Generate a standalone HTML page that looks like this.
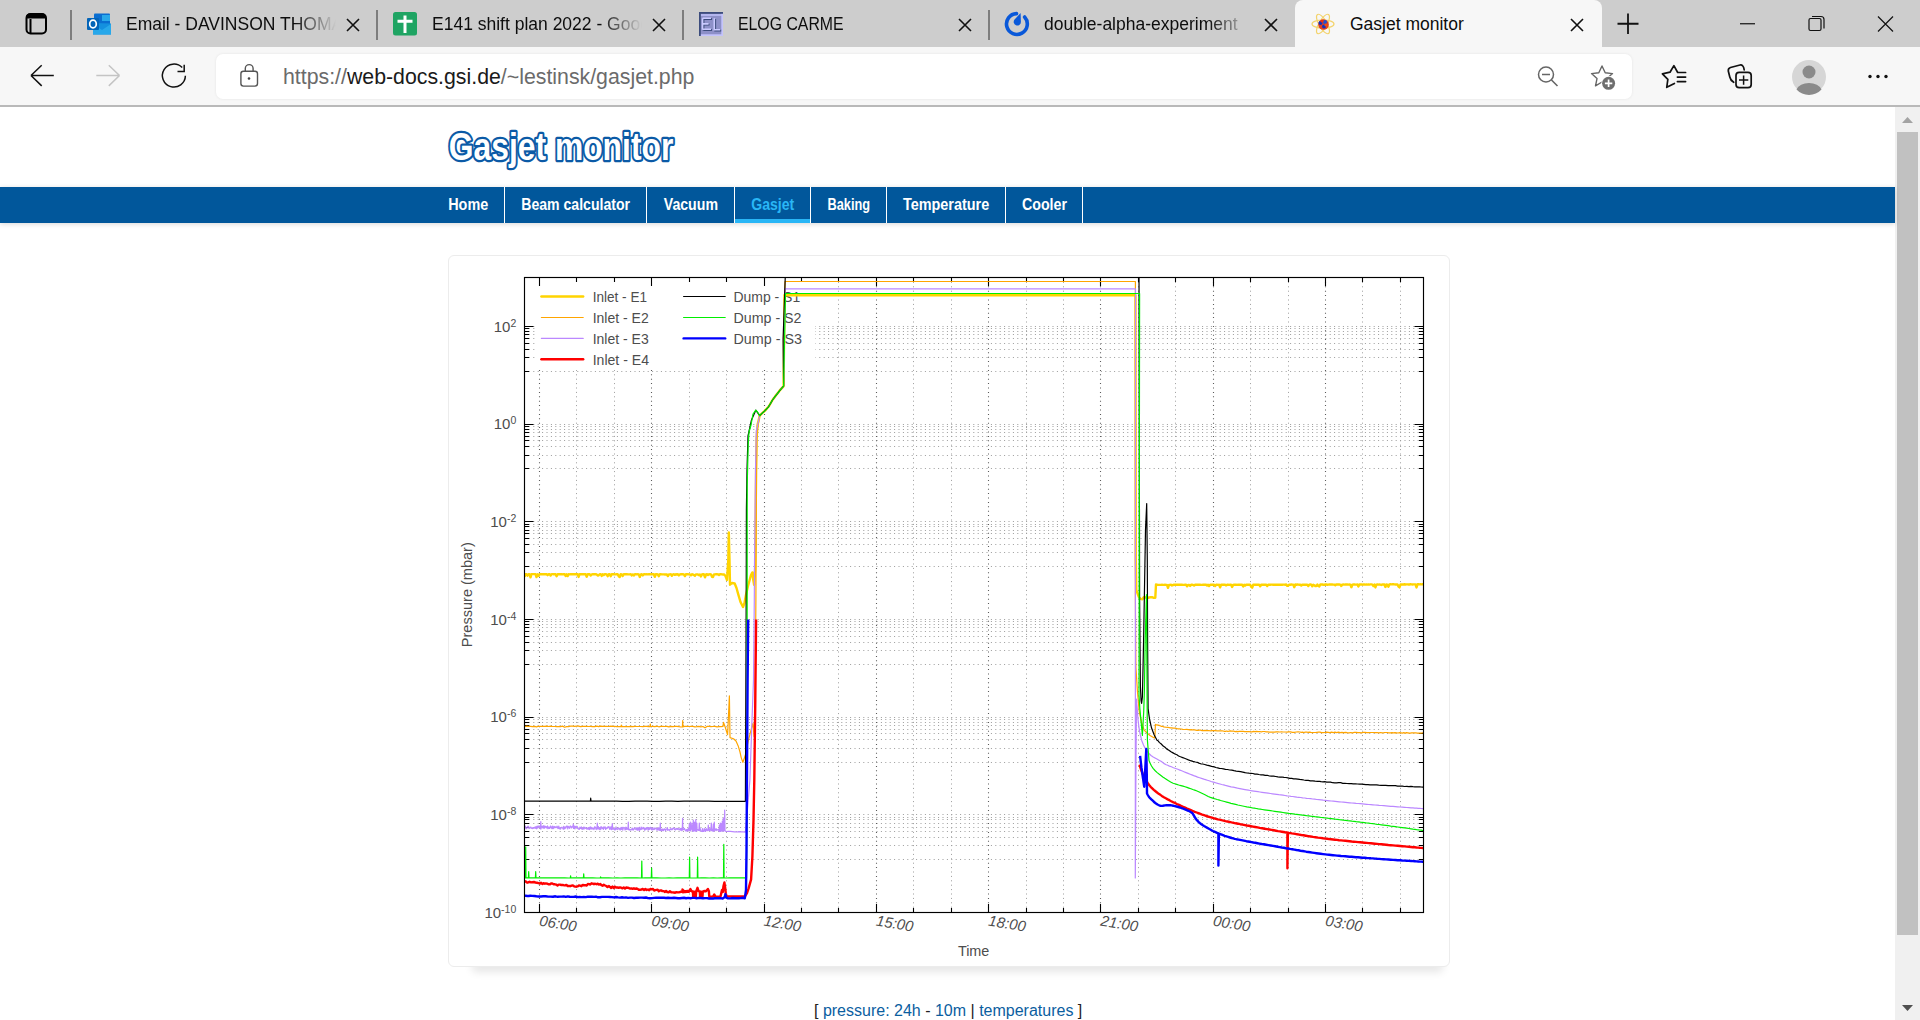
<!DOCTYPE html>
<html><head><meta charset="utf-8"><title>Gasjet monitor</title><style>
*{margin:0;padding:0;box-sizing:border-box}
html,body{width:1920px;height:1020px;overflow:hidden;background:#fff;font-family:"Liberation Sans",sans-serif}
.abs{position:absolute}
#tabs{left:0;top:0;width:1920px;height:47px;background:#cdcdcd}
.tabtxt{position:absolute;top:13.3px;font-size:17.5px;color:#0d0d0d;white-space:nowrap;overflow:hidden;line-height:22px}
.fade{-webkit-mask-image:linear-gradient(to right,#000 80%,transparent 100%)}
.sep{position:absolute;top:10px;width:1.5px;height:30px;background:#7d7d7d}
#toolbar{left:0;top:47px;width:1920px;height:58px;background:#f7f7f7}
#tbline{left:0;top:105px;width:1920px;height:2px;background:#b9b9b9}
#addr{left:216px;top:54px;width:1416px;height:45px;background:#fff;border-radius:7px;box-shadow:0 0 3px rgba(0,0,0,.08)}
#url{left:283px;top:65px;font-size:21.3px;color:#6b6b6b;white-space:nowrap;line-height:24px}
#url b{font-weight:normal;color:#1a1a1a}
#page{left:0;top:107px;width:1895px;height:913px;background:#fff;overflow:hidden}
#sb{left:1895px;top:107px;width:25px;height:913px;background:#f0f0f0}
#thumb{left:1897px;top:132px;width:21px;height:803px;background:#c1c1c1}
#nav{left:0;top:187px;width:1895px;height:36px;background:#01579b;box-shadow:0 1px 5px rgba(0,0,0,.16)}
.nsep{position:absolute;top:187px;width:1.5px;height:36px;background:#fff}
#card{left:448px;top:255px;width:1002px;height:712px;border:1px solid #ececec;border-radius:6px;background:#fff}
#cardsh{left:470px;top:950px;width:975px;height:16px;box-shadow:0 8px 8px -2px rgba(0,0,0,.10);border-radius:0 0 6px 6px}
#foot{left:814px;top:1001px;font-size:16px;line-height:19px;color:#222;white-space:nowrap}
#foot a{color:#0b5e9f;text-decoration:none}
</style></head>
<body>
<div id="tabs" class="abs"></div>
<div class="abs" style="left:1295px;top:0;width:307px;height:47px;background:#f7f7f7;border-radius:8px 8px 0 0"></div>
<div class="sep" style="left:70.25px"></div>
<div class="sep" style="left:376.25px"></div>
<div class="sep" style="left:682.25px"></div>
<div class="sep" style="left:988.25px"></div>
<div class="tabtxt fade" style="left:126px;width:210px">Email - DAVINSON THOMAS</div>
<div class="tabtxt fade" style="left:432px;width:210px">E141 shift plan 2022 - Google Sheets</div>
<div class="tabtxt" style="left:738px;width:210px;transform:scaleX(0.905);transform-origin:0 0">ELOG CARME</div>
<div class="tabtxt fade" style="left:1044px;width:206px">double-alpha-experiment</div>
<div class="tabtxt" style="left:1350px;width:210px">Gasjet monitor</div>
<div id="toolbar" class="abs"></div>
<div id="tbline" class="abs"></div>
<div id="addr" class="abs"></div>
<div id="url" class="abs">https://<b>web-docs.gsi.de</b>/~lestinsk/gasjet.php</div>
<div id="page" class="abs"></div>
<div id="sb" class="abs"></div>
<div id="thumb" class="abs"></div>
<div id="nav" class="abs"></div>
<div class="nsep" style="left:503.75px"></div>
<div class="nsep" style="left:645.5px"></div>
<div class="nsep" style="left:733.75px"></div>
<div class="nsep" style="left:809.75px"></div>
<div class="nsep" style="left:885.5px"></div>
<div class="nsep" style="left:1004.65px"></div>
<div class="nsep" style="left:1081.65px"></div>
<div class="abs" style="left:735px;top:219px;width:75px;height:4px;background:#29b6f6"></div>
<div id="cardsh" class="abs"></div>
<div id="card" class="abs"></div>
<div id="foot" class="abs">[ <a>pressure: 24h</a> - <a>10m</a> | <a>temperatures</a> ]</div>
<svg class="abs" style="left:0;top:0" width="1920" height="1020" viewBox="0 0 1920 1020">
<g fill="none" stroke="#000" stroke-width="2"><rect x="26.5" y="14" width="19.5" height="19.5" rx="4"/><path d="M30.5 19v14"/></g><path d="M26 18.5 v-1 a4 4 0 0 1 4 -4 h12 a4 4 0 0 1 4 4 v1 z" fill="#000"/>
<g><rect x="94" y="13.5" width="16" height="12" rx="1" fill="#0a6ed1"/><rect x="102" y="15" width="8" height="6" fill="#28a8ea"/><path d="M93 23 L111 23.5 L111 34.5 L93 34.5 Z" fill="#1490df"/><path d="M93 24 L102 30 L111 24 L111 34.5 L93 34.5Z" fill="#28a8ea"/><rect x="87" y="18" width="12" height="12" rx="1" fill="#0364b8"/><ellipse cx="93" cy="24" rx="3.3" ry="3.8" fill="none" stroke="#fff" stroke-width="1.7"/></g>
<path d="M347 19 L359 31 M359 19 L347 31" stroke="#111" stroke-width="1.6" fill="none"/>
<path d="M653 19 L665 31 M665 19 L653 31" stroke="#111" stroke-width="1.6" fill="none"/>
<path d="M959 19 L971 31 M971 19 L959 31" stroke="#111" stroke-width="1.6" fill="none"/>
<path d="M1265 19 L1277 31 M1277 19 L1265 31" stroke="#111" stroke-width="1.6" fill="none"/>
<path d="M1571 19 L1583 31 M1583 19 L1571 31" stroke="#111" stroke-width="1.6" fill="none"/>
<rect x="393" y="12" width="24" height="23.5" rx="2.5" fill="#1fa463"/><path d="M397.5 21.2 h15 M405 15.5 v17.5" stroke="#fff" stroke-width="3" fill="none"/>
<rect x="699" y="12" width="24" height="24" fill="#8d90c8"/><rect x="700.5" y="14" width="22" height="2" fill="#b4b6ee"/><rect x="699" y="34.3" width="24" height="1.7" fill="#c4c4fb"/><rect x="721.3" y="12" width="1.7" height="24" fill="#c4c4fb"/><rect x="699" y="12" width="24" height="1.8" fill="#3c4c7c"/><rect x="699" y="12" width="1.8" height="24" fill="#3c4c7c"/><path d="M703.5 19 h8.5 M703.5 19 v11.5 M703.5 24.6 h6 M703.5 30 h8.5 M715.2 19 v11.5 h6" fill="none" stroke="#3c4c7c" stroke-width="1.8"/><path d="M702.6 18.3 h8.5 M702.6 18.3 v11.5 M702.6 23.9 h6 M702.6 29.3 h8.5 M714.3 18.3 v11.5 h6" fill="none" stroke="#cacaff" stroke-width="1.6"/>
<path d="M1016.5 13.6 A10.4 10.4 0 1 0 1024.6 17" fill="none" stroke="#0958d9" stroke-width="3.6" stroke-linecap="round"/><path d="M1020.6 13 L1020.9 22 A3.6 3.6 0 1 1 1014.6 19.6 Z" fill="#0958d9"/>
<g transform="translate(1323 24)"><ellipse rx="11" ry="4" fill="none" stroke="#f3d36b" stroke-width="1.2"/><ellipse rx="11" ry="4" fill="none" stroke="#f3d36b" stroke-width="1.2" transform="rotate(60)"/><ellipse rx="11" ry="4" fill="none" stroke="#f3d36b" stroke-width="1.2" transform="rotate(-60)"/><circle cx="0.5" cy="0.5" r="5.3" fill="#e04020"/><circle cx="-2.5" cy="-1" r="2" fill="#1030c0"/><circle cx="2" cy="-2" r="2" fill="#2050d0"/><circle cx="1" cy="2.5" r="2" fill="#1030c0"/><circle cx="3" cy="1" r="1.6" fill="#f05010"/><circle cx="-1" cy="-3" r="1.6" fill="#f03010"/></g>
<path d="M1628 13.5 v20.5 M1617.5 23.75 h21" stroke="#111" stroke-width="1.8" fill="none"/>
<path d="M1740 23.75 h15" stroke="#111" stroke-width="1.2"/>
<rect x="1809" y="18.5" width="12" height="12" rx="1.5" fill="none" stroke="#111" stroke-width="1.2"/><path d="M1812 16.5 h9 a3 3 0 0 1 3 3 v9" fill="none" stroke="#111" stroke-width="1.2"/>
<path d="M1878 16.5 L1893 31.5 M1893 16.5 L1878 31.5" stroke="#111" stroke-width="1.2"/>
<path d="M31 75.5 H53.8 M31 75.5 L41.7 65.2 M31 75.5 L41.7 85.9" stroke="#111" stroke-width="1.5" fill="none"/>
<path d="M119.5 75.5 H96.3 M119.5 75.5 L108.8 65.2 M119.5 75.5 L108.8 85.9" stroke="#c4c4c4" stroke-width="1.5" fill="none"/>
<path d="M185.4 75.8 A11.5 11.5 0 1 1 182.2 67.6" stroke="#111" stroke-width="1.5" fill="none"/><path d="M184.2 64.8 V71.5 H177.5" stroke="#111" stroke-width="1.5" fill="none"/>
<rect x="240.9" y="71.2" width="16.6" height="14.9" rx="2.5" fill="none" stroke="#555" stroke-width="1.4"/><path d="M245.3 71 V68.5 a3.9 3.9 0 0 1 7.8 0 V71" fill="none" stroke="#555" stroke-width="1.4"/><circle cx="249" cy="78.5" r="1.3" fill="#444"/>
<circle cx="1546" cy="74.5" r="7.5" fill="none" stroke="#666" stroke-width="1.5"/><path d="M1542 74.5 h8 M1551.5 80 L1557.5 86" stroke="#666" stroke-width="1.6" fill="none"/>
<path d="M1602 66 L1605.2 72.8 L1612.5 73.6 L1607 78.6 L1608.5 85.8 L1602 82 L1595.5 85.8 L1597 78.6 L1591.5 73.6 L1598.8 72.8 Z" fill="none" stroke="#666" stroke-width="1.4" stroke-linejoin="round"/><circle cx="1608.6" cy="83.3" r="7.2" fill="#fff"/><circle cx="1608.6" cy="83.3" r="6.5" fill="#6e6e6e"/><path d="M1608.6 79.6 v7.4 M1604.9 83.3 h7.4" stroke="#fff" stroke-width="1.7"/>
<path d="M1674.4 83.4 L1666.75 87.25 L1667.85 79.3 L1662.4 73.85 L1670 72.2 L1673.9 65.65 L1677.7 72.5 H1685.6 M1677.4 77.1 H1685.6 M1677.4 81.6 H1685.6" fill="none" stroke="#111" stroke-width="1.7" stroke-linejoin="round" stroke-linecap="round"/>
<path d="M1733.7 82.3 Q1730.5 80.5 1729.8 77 L1728.3 71 Q1728 68.3 1730.5 67.5 L1740 65 Q1743.5 64.5 1744.2 69.8" fill="none" stroke="#111" stroke-width="1.7" stroke-linecap="round"/><rect x="1736" y="72.3" width="15.2" height="15.4" rx="3.2" fill="none" stroke="#111" stroke-width="1.7"/><path d="M1743.6 75.5 v9.2 M1739 80.1 h9.3" stroke="#111" stroke-width="1.5"/>
<circle cx="1809" cy="77" r="17" fill="#d6d6d6"/><circle cx="1809" cy="72" r="6.5" fill="#8a8a8a"/><path d="M1796.5 89.5 a13 9 0 0 1 25 0 a17 17 0 0 1 -25 0z" fill="#8a8a8a"/>
<circle cx="1870" cy="76.5" r="1.7" fill="#111"/>
<circle cx="1878" cy="76.5" r="1.7" fill="#111"/>
<circle cx="1886" cy="76.5" r="1.7" fill="#111"/>
<path d="M1902 123 L1907.5 117 L1913 123 Z" fill="#a3a3a3"/>
<path d="M1902 1005 L1913 1005 L1907.5 1011 Z" fill="#505050"/>
<text x="448.8" y="160.2" font-family="Liberation Sans" font-weight="bold" font-size="38" fill="#fff" stroke="#0b5aa6" stroke-width="4.6" paint-order="stroke" textLength="224.5" lengthAdjust="spacingAndGlyphs" stroke-linejoin="round">Gasjet monitor</text>
<text x="448.2" y="210" font-family="Liberation Sans" font-weight="bold" font-size="16" fill="#fff" textLength="40.0" lengthAdjust="spacingAndGlyphs">Home</text>
<text x="521.25" y="210" font-family="Liberation Sans" font-weight="bold" font-size="16" fill="#fff" textLength="108.8" lengthAdjust="spacingAndGlyphs">Beam calculator</text>
<text x="663.75" y="210" font-family="Liberation Sans" font-weight="bold" font-size="16" fill="#fff" textLength="54.2" lengthAdjust="spacingAndGlyphs">Vacuum</text>
<text x="751.25" y="210" font-family="Liberation Sans" font-weight="bold" font-size="16" fill="#29b6f6" textLength="43.0" lengthAdjust="spacingAndGlyphs">Gasjet</text>
<text x="827.5" y="210" font-family="Liberation Sans" font-weight="bold" font-size="16" fill="#fff" textLength="42.5" lengthAdjust="spacingAndGlyphs">Baking</text>
<text x="902.9" y="210" font-family="Liberation Sans" font-weight="bold" font-size="16" fill="#fff" textLength="86.3" lengthAdjust="spacingAndGlyphs">Temperature</text>
<text x="1022" y="210" font-family="Liberation Sans" font-weight="bold" font-size="16" fill="#fff" textLength="45.0" lengthAdjust="spacingAndGlyphs">Cooler</text>
<defs><clipPath id="pc"><rect x="524.5" y="277.5" width="899.0" height="634.9"/></clipPath></defs>
<path d="M576.50 277.5 V912.4 M614.50 277.5 V912.4 M689.50 277.5 V912.4 M726.50 277.5 V912.4 M801.50 277.5 V912.4 M838.50 277.5 V912.4 M913.50 277.5 V912.4 M951.50 277.5 V912.4 M1026.50 277.5 V912.4 M1063.50 277.5 V912.4 M1138.50 277.5 V912.4 M1175.50 277.5 V912.4 M1250.50 277.5 V912.4 M1288.50 277.5 V912.4 M1362.50 277.5 V912.4 M1400.50 277.5 V912.4 M524.5 912.50 H1423.5 M524.5 814.50 H1423.5 M524.5 717.50 H1423.5 M524.5 619.50 H1423.5 M524.5 521.50 H1423.5 M524.5 424.50 H1423.5 M524.5 326.50 H1423.5 M524.5 859.50 H1423.5 M524.5 845.50 H1423.5 M524.5 837.50 H1423.5 M524.5 831.50 H1423.5 M524.5 827.50 H1423.5 M524.5 823.50 H1423.5 M524.5 819.50 H1423.5 M524.5 817.50 H1423.5 M524.5 762.50 H1423.5 M524.5 748.50 H1423.5 M524.5 739.50 H1423.5 M524.5 733.50 H1423.5 M524.5 729.50 H1423.5 M524.5 725.50 H1423.5 M524.5 722.50 H1423.5 M524.5 719.50 H1423.5 M524.5 664.50 H1423.5 M524.5 650.50 H1423.5 M524.5 642.50 H1423.5 M524.5 636.50 H1423.5 M524.5 631.50 H1423.5 M524.5 627.50 H1423.5 M524.5 624.50 H1423.5 M524.5 621.50 H1423.5 M524.5 566.50 H1423.5 M524.5 552.50 H1423.5 M524.5 544.50 H1423.5 M524.5 538.50 H1423.5 M524.5 533.50 H1423.5 M524.5 530.50 H1423.5 M524.5 526.50 H1423.5 M524.5 524.50 H1423.5 M524.5 468.50 H1423.5 M524.5 455.50 H1423.5 M524.5 446.50 H1423.5 M524.5 440.50 H1423.5 M524.5 436.50 H1423.5 M524.5 432.50 H1423.5 M524.5 429.50 H1423.5 M524.5 426.50 H1423.5 M524.5 371.50 H1423.5 M524.5 357.50 H1423.5 M524.5 349.50 H1423.5 M524.5 343.50 H1423.5 M524.5 338.50 H1423.5 M524.5 334.50 H1423.5 M524.5 331.50 H1423.5 M524.5 328.50 H1423.5" stroke="#9c9c9c" stroke-width="1" stroke-dasharray="1 3.4" fill="none"/>
<path d="M539.50 277.5 V912.4 M651.50 277.5 V912.4 M764.50 277.5 V912.4 M876.50 277.5 V912.4 M988.50 277.5 V912.4 M1100.50 277.5 V912.4 M1213.50 277.5 V912.4 M1325.50 277.5 V912.4" stroke="#5a5a5a" stroke-width="1.1" stroke-dasharray="1 3.4" fill="none"/>
<rect x="535" y="279" width="280.5" height="91" fill="#fff"/>
<path d="M539.50 912.5 v-8.5 M539.50 277.5 v8.5 M576.50 912.5 v-4.5 M576.50 277.5 v4.5 M614.50 912.5 v-4.5 M614.50 277.5 v4.5 M651.50 912.5 v-8.5 M651.50 277.5 v8.5 M689.50 912.5 v-4.5 M689.50 277.5 v4.5 M726.50 912.5 v-4.5 M726.50 277.5 v4.5 M764.50 912.5 v-8.5 M764.50 277.5 v8.5 M801.50 912.5 v-4.5 M801.50 277.5 v4.5 M838.50 912.5 v-4.5 M838.50 277.5 v4.5 M876.50 912.5 v-8.5 M876.50 277.5 v8.5 M913.50 912.5 v-4.5 M913.50 277.5 v4.5 M951.50 912.5 v-4.5 M951.50 277.5 v4.5 M988.50 912.5 v-8.5 M988.50 277.5 v8.5 M1026.50 912.5 v-4.5 M1026.50 277.5 v4.5 M1063.50 912.5 v-4.5 M1063.50 277.5 v4.5 M1100.50 912.5 v-8.5 M1100.50 277.5 v8.5 M1138.50 912.5 v-4.5 M1138.50 277.5 v4.5 M1175.50 912.5 v-4.5 M1175.50 277.5 v4.5 M1213.50 912.5 v-8.5 M1213.50 277.5 v8.5 M1250.50 912.5 v-4.5 M1250.50 277.5 v4.5 M1288.50 912.5 v-4.5 M1288.50 277.5 v4.5 M1325.50 912.5 v-8.5 M1325.50 277.5 v8.5 M1362.50 912.5 v-4.5 M1362.50 277.5 v4.5 M1400.50 912.5 v-4.5 M1400.50 277.5 v4.5 M524.5 912.50 h9 M1423.5 912.50 h-9 M524.5 814.50 h9 M1423.5 814.50 h-9 M524.5 717.50 h9 M1423.5 717.50 h-9 M524.5 619.50 h9 M1423.5 619.50 h-9 M524.5 521.50 h9 M1423.5 521.50 h-9 M524.5 424.50 h9 M1423.5 424.50 h-9 M524.5 326.50 h9 M1423.5 326.50 h-9 M524.5 859.50 h4.5 M1423.5 859.50 h-4.5 M524.5 845.50 h4.5 M1423.5 845.50 h-4.5 M524.5 837.50 h4.5 M1423.5 837.50 h-4.5 M524.5 831.50 h4.5 M1423.5 831.50 h-4.5 M524.5 827.50 h4.5 M1423.5 827.50 h-4.5 M524.5 823.50 h4.5 M1423.5 823.50 h-4.5 M524.5 819.50 h4.5 M1423.5 819.50 h-4.5 M524.5 817.50 h4.5 M1423.5 817.50 h-4.5 M524.5 762.50 h4.5 M1423.5 762.50 h-4.5 M524.5 748.50 h4.5 M1423.5 748.50 h-4.5 M524.5 739.50 h4.5 M1423.5 739.50 h-4.5 M524.5 733.50 h4.5 M1423.5 733.50 h-4.5 M524.5 729.50 h4.5 M1423.5 729.50 h-4.5 M524.5 725.50 h4.5 M1423.5 725.50 h-4.5 M524.5 722.50 h4.5 M1423.5 722.50 h-4.5 M524.5 719.50 h4.5 M1423.5 719.50 h-4.5 M524.5 664.50 h4.5 M1423.5 664.50 h-4.5 M524.5 650.50 h4.5 M1423.5 650.50 h-4.5 M524.5 642.50 h4.5 M1423.5 642.50 h-4.5 M524.5 636.50 h4.5 M1423.5 636.50 h-4.5 M524.5 631.50 h4.5 M1423.5 631.50 h-4.5 M524.5 627.50 h4.5 M1423.5 627.50 h-4.5 M524.5 624.50 h4.5 M1423.5 624.50 h-4.5 M524.5 621.50 h4.5 M1423.5 621.50 h-4.5 M524.5 566.50 h4.5 M1423.5 566.50 h-4.5 M524.5 552.50 h4.5 M1423.5 552.50 h-4.5 M524.5 544.50 h4.5 M1423.5 544.50 h-4.5 M524.5 538.50 h4.5 M1423.5 538.50 h-4.5 M524.5 533.50 h4.5 M1423.5 533.50 h-4.5 M524.5 530.50 h4.5 M1423.5 530.50 h-4.5 M524.5 526.50 h4.5 M1423.5 526.50 h-4.5 M524.5 524.50 h4.5 M1423.5 524.50 h-4.5 M524.5 468.50 h4.5 M1423.5 468.50 h-4.5 M524.5 455.50 h4.5 M1423.5 455.50 h-4.5 M524.5 446.50 h4.5 M1423.5 446.50 h-4.5 M524.5 440.50 h4.5 M1423.5 440.50 h-4.5 M524.5 436.50 h4.5 M1423.5 436.50 h-4.5 M524.5 432.50 h4.5 M1423.5 432.50 h-4.5 M524.5 429.50 h4.5 M1423.5 429.50 h-4.5 M524.5 426.50 h4.5 M1423.5 426.50 h-4.5 M524.5 371.50 h4.5 M1423.5 371.50 h-4.5 M524.5 357.50 h4.5 M1423.5 357.50 h-4.5 M524.5 349.50 h4.5 M1423.5 349.50 h-4.5 M524.5 343.50 h4.5 M1423.5 343.50 h-4.5 M524.5 338.50 h4.5 M1423.5 338.50 h-4.5 M524.5 334.50 h4.5 M1423.5 334.50 h-4.5 M524.5 331.50 h4.5 M1423.5 331.50 h-4.5 M524.5 328.50 h4.5 M1423.5 328.50 h-4.5" stroke="#000" stroke-width="1.1" fill="none"/>
<g font-family="Liberation Sans" font-size="15" fill="#4d4d4d"><text x="516.3" y="917.8" text-anchor="end"><tspan>10</tspan><tspan font-size="10.5" dy="-5">-10</tspan></text><text x="516.3" y="820.1" text-anchor="end"><tspan>10</tspan><tspan font-size="10.5" dy="-5">-8</tspan></text><text x="516.3" y="722.4" text-anchor="end"><tspan>10</tspan><tspan font-size="10.5" dy="-5">-6</tspan></text><text x="516.3" y="624.8" text-anchor="end"><tspan>10</tspan><tspan font-size="10.5" dy="-5">-4</tspan></text><text x="516.3" y="527.1" text-anchor="end"><tspan>10</tspan><tspan font-size="10.5" dy="-5">-2</tspan></text><text x="516.3" y="429.4" text-anchor="end"><tspan>10</tspan><tspan font-size="10.5" dy="-5">0</tspan></text><text x="516.3" y="331.7" text-anchor="end"><tspan>10</tspan><tspan font-size="10.5" dy="-5">2</tspan></text></g>
<g font-family="Liberation Sans" font-size="15" fill="#4d4d4d"><text transform="translate(538.7 925.6) rotate(9)" font-style="italic">06:00</text><text transform="translate(650.9 925.6) rotate(9)" font-style="italic">09:00</text><text transform="translate(763.2 925.6) rotate(9)" font-style="italic">12:00</text><text transform="translate(875.5 925.6) rotate(9)" font-style="italic">15:00</text><text transform="translate(987.8 925.6) rotate(9)" font-style="italic">18:00</text><text transform="translate(1100.1 925.6) rotate(9)" font-style="italic">21:00</text><text transform="translate(1212.4 925.6) rotate(9)" font-style="italic">00:00</text><text transform="translate(1324.7 925.6) rotate(9)" font-style="italic">03:00</text></g>
<text transform="translate(471.9 647.2) rotate(-90)" font-family="Liberation Sans" font-size="15" fill="#4d4d4d" textLength="105" lengthAdjust="spacingAndGlyphs">Pressure (mbar)</text>
<text x="957.9" y="955.9" font-family="Liberation Sans" font-size="15" fill="#4d4d4d" textLength="31.5" lengthAdjust="spacingAndGlyphs">Time</text>
<g font-family="Liberation Sans" font-size="15" fill="#4d4d4d"><path d="M541.4 296.5 H583.2" stroke="#ffd400" stroke-width="2.4" stroke-linecap="round"/><text x="592.7" y="302.1" textLength="54.3" lengthAdjust="spacingAndGlyphs">Inlet - E1</text><path d="M541.4 317.5 H583.2" stroke="#ffa500" stroke-width="1.2" stroke-linecap="round"/><text x="592.7" y="323.1" textLength="56" lengthAdjust="spacingAndGlyphs">Inlet - E2</text><path d="M541.4 338.4 H583.2" stroke="#bb88ff" stroke-width="1.2" stroke-linecap="round"/><text x="592.7" y="344.0" textLength="56" lengthAdjust="spacingAndGlyphs">Inlet - E3</text><path d="M541.4 359.3 H583.2" stroke="#ff0000" stroke-width="2.4" stroke-linecap="round"/><text x="592.7" y="364.9" textLength="56.3" lengthAdjust="spacingAndGlyphs">Inlet - E4</text><path d="M683.6 296.5 H725.2" stroke="#000000" stroke-width="1.2" stroke-linecap="round"/><text x="733.5" y="302.1" textLength="66.7" lengthAdjust="spacingAndGlyphs">Dump - S1</text><path d="M683.6 317.5 H725.2" stroke="#00ee00" stroke-width="1.2" stroke-linecap="round"/><text x="733.5" y="323.1" textLength="68" lengthAdjust="spacingAndGlyphs">Dump - S2</text><path d="M683.6 338.4 H725.2" stroke="#0000ff" stroke-width="2.4" stroke-linecap="round"/><text x="733.5" y="344.0" textLength="68.5" lengthAdjust="spacingAndGlyphs">Dump - S3</text></g>
<g clip-path="url(#pc)"><path d="M524.5 576.7 L525.5 574.2 L526.5 574.1 L527.5 575.7 L528.5 574.2 L529.5 574.2 L530.5 577.3 L531.5 574.2 L532.5 574.1 L533.5 574.1 L534.5 574.1 L535.5 574.3 L536.5 577.1 L537.5 574.3 L538.5 575.7 L539.5 574.3 L540.5 574.3 L541.5 574.2 L542.5 574.3 L543.5 574.2 L544.6 574.2 L545.6 574.2 L546.6 574.2 L547.6 575.2 L548.6 574.3 L549.6 574.1 L550.6 575.5 L551.6 574.1 L552.6 574.1 L553.6 574.3 L554.6 574.3 L555.6 574.3 L556.6 576.3 L557.6 574.2 L558.6 574.2 L559.6 574.2 L560.6 574.3 L561.6 574.1 L562.6 574.4 L563.6 574.2 L564.6 574.2 L565.6 575.9 L566.6 574.2 L567.6 576.1 L568.6 574.2 L569.6 574.4 L570.6 574.2 L571.6 574.1 L572.6 574.2 L573.6 574.3 L574.6 574.2 L575.6 574.3 L576.6 574.1 L577.6 574.2 L578.6 576.9 L579.6 574.2 L580.6 574.3 L581.6 574.3 L582.6 574.2 L583.6 574.2 L584.7 574.3 L585.7 574.2 L586.7 576.7 L587.7 574.3 L588.7 574.3 L589.7 574.3 L590.7 575.6 L591.7 574.4 L592.7 574.3 L593.7 574.2 L594.7 574.2 L595.7 574.2 L596.7 574.4 L597.7 575.6 L598.7 575.3 L599.7 574.2 L600.7 574.2 L601.7 575.9 L602.7 574.3 L603.7 575.0 L604.7 574.2 L605.7 574.3 L606.7 574.4 L607.7 576.2 L608.7 574.3 L609.7 574.3 L610.7 576.2 L611.7 574.3 L612.7 574.2 L613.7 574.2 L614.7 574.4 L615.7 574.4 L616.7 574.2 L617.7 574.2 L618.7 576.3 L619.7 577.1 L620.7 574.2 L621.7 574.4 L622.7 576.0 L623.7 574.2 L624.8 574.2 L625.8 574.2 L626.8 574.2 L627.8 574.4 L628.8 574.4 L629.8 574.4 L630.8 574.2 L631.8 575.4 L632.8 574.4 L633.8 575.5 L634.8 574.2 L635.8 574.2 L636.8 574.4 L637.8 574.3 L638.8 574.4 L639.8 577.0 L640.8 574.4 L641.8 574.3 L642.8 575.4 L643.8 574.3 L644.8 574.2 L645.8 574.4 L646.8 574.3 L647.8 574.4 L648.8 574.3 L649.8 574.2 L650.8 574.4 L651.8 574.3 L652.8 574.2 L653.8 574.3 L654.8 576.8 L655.8 574.3 L656.8 574.2 L657.8 574.4 L658.8 576.3 L659.8 574.3 L660.8 574.3 L661.8 574.4 L662.8 574.4 L663.8 574.4 L664.9 574.5 L665.9 574.4 L666.9 574.5 L667.9 576.0 L668.9 574.4 L669.9 574.4 L670.9 574.3 L671.9 575.8 L672.9 574.4 L673.9 574.3 L674.9 574.9 L675.9 574.3 L676.9 574.5 L677.9 574.3 L678.9 575.4 L679.9 574.4 L680.9 574.3 L681.9 574.3 L682.9 574.3 L683.9 574.4 L684.9 576.1 L685.9 574.2 L686.9 574.3 L687.9 574.3 L688.9 574.4 L689.9 574.4 L690.9 575.3 L691.9 574.3 L692.9 574.4 L693.9 575.1 L694.9 575.8 L695.9 574.4 L696.9 574.4 L697.9 574.5 L698.9 575.1 L699.9 574.4 L700.9 576.5 L701.9 574.4 L702.9 574.3 L703.9 574.3 L705.0 577.3 L706.0 574.5 L707.0 574.3 L708.0 575.0 L709.0 574.4 L710.0 574.3 L711.0 574.4 L712.0 576.8 L713.0 577.0 L714.0 574.4 L715.0 574.4 L716.0 574.3 L717.0 574.3 L718.0 574.4 L719.0 575.0 L720.0 574.3 L721.0 574.3 L722.0 574.4 L723.0 574.5 L724.0 574.4 L725.5 576.0 L727.0 580.0 L728.3 560.0 L728.8 532.4 L729.5 560.0 L730.0 584.7 L732.0 583.0 L734.7 583.5 L736.5 588.0 L738.2 594.1 L740.5 602.0 L743.0 607.0 L744.5 603.0 L745.9 595.3 L748.0 586.0 L750.0 578.8 L751.0 575.0 L752.4 572.4 L753.3 580.0 L754.1 584.7 L755.3 566.0 L755.8 500.0 L756.5 440.0 L757.5 425.0 L759.7 415.7 L762.0 413.4 L765.0 410.6 L768.5 406.8 L770.5 403.5 L772.5 400.0 L775.0 396.6 L777.4 393.6 L780.5 389.6 L783.6 386.1 L784.5 295.2 L1135.5 295.2 L1135.8 560.0 L1136.3 590.0 L1138.8 596.9 L1139.0 597.2 L1140.6 598.9 L1142.3 599.2 L1143.9 597.1 L1145.5 597.5 L1147.2 597.4 L1148.8 597.7 L1150.4 597.1 L1152.0 597.2 L1153.7 597.9 L1155.3 597.7 L1156.0 584.5 L1157.0 584.8 L1158.0 584.9 L1159.0 584.9 L1160.0 584.9 L1161.0 584.9 L1162.0 584.8 L1163.0 584.9 L1164.0 584.9 L1165.0 584.8 L1166.0 584.9 L1167.0 584.9 L1168.0 587.8 L1169.0 584.9 L1170.0 584.9 L1171.0 584.8 L1172.0 585.5 L1173.0 585.0 L1174.0 584.8 L1175.0 584.8 L1176.0 584.7 L1177.0 584.8 L1178.0 584.7 L1179.0 584.8 L1180.0 584.8 L1181.0 584.8 L1182.0 584.8 L1183.0 584.9 L1184.1 584.9 L1185.1 584.8 L1186.1 584.8 L1187.1 586.2 L1188.1 585.0 L1189.1 584.9 L1190.1 585.9 L1191.1 584.7 L1192.1 584.8 L1193.1 584.9 L1194.1 585.6 L1195.1 584.8 L1196.1 584.8 L1197.1 584.7 L1198.1 584.8 L1199.1 584.8 L1200.1 584.8 L1201.1 584.9 L1202.1 584.9 L1203.1 584.7 L1204.1 584.8 L1205.1 584.8 L1206.1 584.8 L1207.1 585.6 L1208.1 584.7 L1209.1 586.1 L1210.1 584.8 L1211.1 584.8 L1212.1 584.7 L1213.1 584.7 L1214.1 584.8 L1215.1 586.0 L1216.1 584.7 L1217.1 584.8 L1218.1 584.9 L1219.1 584.8 L1220.1 587.4 L1221.1 584.8 L1222.1 584.8 L1223.1 584.8 L1224.1 584.7 L1225.1 584.7 L1226.1 585.4 L1227.1 584.7 L1228.1 584.8 L1229.1 584.9 L1230.1 584.8 L1231.1 584.8 L1232.1 586.9 L1233.1 584.9 L1234.1 584.7 L1235.1 584.7 L1236.1 584.8 L1237.2 584.9 L1238.2 584.6 L1239.2 584.8 L1240.2 584.8 L1241.2 584.8 L1242.2 584.8 L1243.2 586.5 L1244.2 584.8 L1245.2 585.5 L1246.2 584.6 L1247.2 584.7 L1248.2 584.8 L1249.2 584.8 L1250.2 584.7 L1251.2 586.8 L1252.2 587.7 L1253.2 584.8 L1254.2 584.7 L1255.2 584.7 L1256.2 584.8 L1257.2 584.7 L1258.2 584.8 L1259.2 584.8 L1260.2 586.2 L1261.2 584.8 L1262.2 584.6 L1263.2 584.8 L1264.2 584.8 L1265.2 584.6 L1266.2 584.8 L1267.2 586.0 L1268.2 584.7 L1269.2 584.6 L1270.2 584.7 L1271.2 584.6 L1272.2 584.6 L1273.2 584.8 L1274.2 584.8 L1275.2 584.8 L1276.2 584.6 L1277.2 584.8 L1278.2 584.6 L1279.2 584.8 L1280.2 584.8 L1281.2 584.8 L1282.2 584.7 L1283.2 584.6 L1284.2 584.6 L1285.2 584.7 L1286.2 584.5 L1287.2 585.9 L1288.2 585.7 L1289.2 584.7 L1290.2 584.7 L1291.3 584.5 L1292.3 584.6 L1293.3 584.6 L1294.3 587.2 L1295.3 584.5 L1296.3 584.8 L1297.3 584.5 L1298.3 584.6 L1299.3 584.7 L1300.3 584.7 L1301.3 585.5 L1302.3 584.6 L1303.3 584.7 L1304.3 584.7 L1305.3 584.7 L1306.3 584.7 L1307.3 584.7 L1308.3 586.0 L1309.3 584.6 L1310.3 584.5 L1311.3 584.7 L1312.3 586.3 L1313.3 584.7 L1314.3 585.2 L1315.3 586.1 L1316.3 586.0 L1317.3 584.6 L1318.3 585.9 L1319.3 586.4 L1320.3 584.5 L1321.3 584.5 L1322.3 584.5 L1323.3 584.7 L1324.3 584.7 L1325.3 584.5 L1326.3 584.5 L1327.3 584.7 L1328.3 584.6 L1329.3 584.5 L1330.3 584.5 L1331.3 584.5 L1332.3 584.5 L1333.3 584.6 L1334.3 584.6 L1335.3 585.2 L1336.3 584.5 L1337.3 584.5 L1338.3 584.4 L1339.3 584.5 L1340.3 584.6 L1341.3 585.9 L1342.3 584.6 L1343.3 584.5 L1344.4 584.6 L1345.4 584.5 L1346.4 584.5 L1347.4 584.5 L1348.4 584.6 L1349.4 584.5 L1350.4 584.6 L1351.4 587.2 L1352.4 584.6 L1353.4 584.5 L1354.4 584.4 L1355.4 584.6 L1356.4 584.6 L1357.4 584.4 L1358.4 586.4 L1359.4 584.5 L1360.4 584.5 L1361.4 584.4 L1362.4 584.6 L1363.4 584.5 L1364.4 584.5 L1365.4 584.6 L1366.4 584.5 L1367.4 584.6 L1368.4 584.4 L1369.4 584.6 L1370.4 584.4 L1371.4 584.4 L1372.4 584.6 L1373.4 586.0 L1374.4 584.6 L1375.4 587.4 L1376.4 584.6 L1377.4 584.4 L1378.4 584.6 L1379.4 584.5 L1380.4 584.6 L1381.4 585.0 L1382.4 584.5 L1383.4 584.4 L1384.4 584.5 L1385.4 587.0 L1386.4 584.5 L1387.4 584.6 L1388.4 586.7 L1389.4 584.5 L1390.4 584.3 L1391.4 584.4 L1392.4 584.3 L1393.4 584.3 L1394.4 584.4 L1395.4 584.5 L1396.4 584.5 L1397.5 584.5 L1398.5 586.6 L1399.5 587.4 L1400.5 584.5 L1401.5 584.5 L1402.5 584.5 L1403.5 584.5 L1404.5 584.3 L1405.5 584.5 L1406.5 584.4 L1407.5 584.4 L1408.5 584.5 L1409.5 584.5 L1410.5 584.3 L1411.5 584.4 L1412.5 584.5 L1413.5 584.4 L1414.5 584.4 L1415.5 584.5 L1416.5 587.4 L1417.5 584.3 L1418.5 584.3 L1419.5 584.4 L1420.5 584.3 L1421.5 584.4 L1422.5 584.3 L1423.5 584.3" stroke="#ffd400" stroke-width="2.4" fill="none" stroke-linejoin="round"/><path d="M524.5 726.5 L526.5 726.1 L528.5 726.4 L530.5 726.4 L532.5 726.6 L534.5 726.4 L536.5 726.9 L538.5 726.3 L540.5 726.4 L542.5 726.4 L544.6 726.4 L546.6 726.1 L548.6 726.5 L550.6 726.1 L552.6 726.5 L554.6 726.5 L556.6 726.6 L558.6 726.5 L560.6 726.6 L562.6 726.1 L564.6 727.2 L566.6 726.6 L568.6 726.6 L570.6 726.2 L572.6 726.1 L574.6 726.3 L576.6 726.1 L578.6 726.1 L580.6 726.6 L582.6 726.4 L584.7 726.3 L586.7 726.3 L588.7 726.5 L590.7 726.3 L592.7 726.7 L594.7 726.7 L596.7 726.2 L598.7 726.6 L600.7 726.2 L602.7 726.3 L604.7 726.4 L606.7 726.3 L608.7 726.5 L610.7 726.1 L612.7 726.4 L614.7 726.4 L616.7 726.6 L618.7 726.5 L620.7 726.6 L621.0 726.6 L621.3 725.0 L621.6 726.6 L622.7 726.6 L624.8 726.5 L626.8 726.7 L628.8 726.7 L630.8 726.3 L632.8 726.6 L634.8 726.3 L636.8 726.5 L638.8 726.5 L640.8 726.5 L642.8 726.6 L644.8 726.4 L646.8 726.3 L648.8 726.6 L650.0 726.6 L650.3 724.0 L650.6 726.6 L650.8 726.5 L652.8 726.4 L654.8 726.7 L656.8 726.2 L658.8 726.8 L660.8 726.4 L662.8 726.3 L664.9 726.5 L666.9 726.4 L668.9 726.8 L670.9 726.4 L672.9 726.7 L674.9 726.3 L676.9 726.4 L678.9 726.7 L680.9 727.0 L682.4 727.0 L682.7 720.6 L683.0 727.0 L682.9 726.7 L684.9 726.3 L686.9 726.3 L688.9 726.5 L690.9 726.4 L692.9 726.4 L694.9 726.8 L696.9 726.6 L698.9 726.3 L700.9 726.8 L702.9 726.5 L705.0 727.8 L707.0 726.4 L709.0 726.4 L711.0 726.6 L713.0 726.5 L715.0 726.3 L717.0 726.8 L719.0 726.6 L721.0 726.6 L723.0 726.3 L723.5 722.4 L725.5 728.0 L727.6 734.7 L729.4 695.9 L730.0 737.6 L733.5 738.8 L736.0 741.0 L738.2 745.9 L740.0 752.0 L741.2 757.6 L742.9 762.4 L745.3 755.3 L748.2 741.2 L751.2 729.4 L752.9 723.5 L754.1 736.5 L755.2 690.0 L755.9 600.0 L756.4 470.0 L757.0 432.0 L759.7 415.7 L762.0 413.4 L765.0 410.6 L768.5 406.8 L770.5 403.5 L772.5 400.0 L775.0 396.6 L777.4 393.6 L780.5 389.6 L783.6 386.1 L785.0 281.5 L1135.4 281.5 L1135.4 600.0 L1135.9 667.4 L1137.5 692.0 L1139.2 711.3 L1141.5 722.0 L1144.0 729.8 L1147.0 733.0 L1150.0 735.5 L1154.3 738.0 L1155.0 735.0 L1155.4 724.4 L1155.4 724.7 L1156.5 724.8 L1158.0 725.2 L1160.0 725.7 L1161.2 726.3 L1162.4 726.3 L1163.7 726.9 L1165.5 727.2 L1168.0 727.3 L1169.1 727.7 L1170.4 727.8 L1171.7 727.8 L1173.1 728.2 L1174.5 728.2 L1176.0 728.3 L1177.6 728.8 L1179.3 728.9 L1181.1 729.0 L1182.9 729.3 L1184.7 729.5 L1186.6 729.4 L1188.6 729.6 L1189.9 729.9 L1191.1 729.6 L1192.3 729.8 L1193.4 729.9 L1194.6 729.9 L1195.7 730.1 L1196.9 730.3 L1198.0 730.4 L1199.3 730.2 L1200.6 730.2 L1202.0 730.6 L1203.4 730.6 L1205.0 730.4 L1206.7 730.6 L1208.5 730.5 L1210.4 730.8 L1212.6 730.6 L1214.8 730.6 L1217.3 730.8 L1220.0 730.8 L1221.1 730.9 L1222.1 730.9 L1223.2 731.0 L1224.4 731.4 L1225.5 731.3 L1226.6 731.0 L1227.8 731.4 L1229.0 731.2 L1230.2 730.9 L1231.4 731.2 L1232.7 731.0 L1234.0 731.2 L1235.2 731.6 L1236.5 731.4 L1237.9 731.7 L1239.2 731.4 L1240.5 731.3 L1241.9 731.3 L1243.3 731.3 L1244.7 731.6 L1246.1 731.6 L1247.6 731.7 L1249.0 731.5 L1250.5 731.8 L1252.0 731.8 L1253.5 731.4 L1255.0 731.7 L1256.5 731.4 L1258.1 731.6 L1259.7 731.5 L1261.3 731.8 L1262.9 731.5 L1264.5 731.5 L1266.1 731.9 L1267.8 731.9 L1269.4 732.1 L1271.1 732.1 L1272.8 732.0 L1274.5 732.1 L1276.2 731.8 L1278.0 731.9 L1279.7 732.0 L1281.5 731.9 L1283.3 732.0 L1285.1 732.0 L1286.9 732.1 L1288.7 731.8 L1290.6 731.9 L1292.4 732.3 L1294.3 732.4 L1296.2 732.0 L1298.1 731.9 L1300.0 732.0 L1301.3 732.4 L1302.5 732.2 L1303.9 732.5 L1305.2 732.2 L1306.6 732.0 L1308.0 732.4 L1309.4 732.1 L1310.9 732.4 L1312.3 732.6 L1313.8 732.5 L1315.3 732.5 L1316.9 732.3 L1318.4 732.1 L1320.0 732.2 L1321.6 732.6 L1323.2 732.6 L1324.9 732.5 L1326.5 732.2 L1328.2 732.4 L1329.9 732.6 L1331.6 732.2 L1333.3 732.7 L1335.0 732.2 L1336.7 732.6 L1338.4 732.2 L1340.2 732.7 L1341.9 732.4 L1343.7 732.6 L1345.5 732.3 L1347.2 732.7 L1349.0 732.9 L1350.8 732.5 L1352.6 732.8 L1354.3 732.4 L1356.1 732.3 L1357.9 732.7 L1359.7 732.5 L1361.4 732.8 L1363.2 732.4 L1365.0 732.4 L1366.8 732.6 L1368.5 732.7 L1370.3 732.5 L1372.0 732.5 L1373.7 732.5 L1375.5 732.6 L1377.2 732.5 L1378.9 732.8 L1380.6 732.5 L1382.2 732.8 L1383.9 732.7 L1385.6 732.5 L1387.2 732.5 L1388.8 732.9 L1390.4 732.9 L1392.0 732.6 L1393.5 732.9 L1395.1 732.6 L1396.6 732.8 L1398.1 733.0 L1399.6 732.7 L1401.0 732.8 L1402.4 733.1 L1403.8 732.7 L1405.2 733.1 L1406.5 732.6 L1407.9 732.8 L1409.1 733.1 L1410.4 733.1 L1411.6 732.8 L1412.8 732.9 L1414.0 732.8 L1415.1 732.8 L1416.2 732.9 L1417.2 733.2 L1418.2 733.0 L1419.2 733.2 L1420.2 733.0 L1421.1 733.1 L1421.9 733.0 L1422.7 732.8 L1423.5 733.0" stroke="#ffa500" stroke-width="1.2" fill="none" stroke-linejoin="round"/><path d="M524.5 826.5 L525.0 826.1 L525.4 826.4 L525.9 828.4 L526.3 828.6 L526.8 828.6 L527.2 827.2 L527.7 826.3 L528.1 826.6 L528.6 826.4 L529.0 828.6 L529.5 828.3 L529.9 828.1 L530.4 827.2 L530.8 827.0 L531.3 827.9 L531.7 828.4 L532.2 827.9 L532.6 828.6 L533.1 827.5 L533.5 828.3 L534.0 827.5 L534.4 827.3 L534.9 828.3 L535.3 827.0 L535.8 828.3 L536.2 826.4 L536.7 828.8 L537.1 828.0 L537.6 826.2 L538.0 827.8 L538.5 826.5 L538.9 825.9 L539.4 826.0 L539.8 827.0 L540.3 828.8 L540.5 828.8 L540.8 821.5 L541.1 828.8 L540.7 826.4 L541.2 827.4 L541.6 827.1 L542.1 826.2 L542.5 827.9 L543.0 826.6 L543.4 825.7 L543.9 828.5 L544.3 828.2 L544.8 825.8 L545.2 827.2 L545.7 826.7 L546.1 827.9 L546.6 826.7 L547.0 828.0 L547.5 825.8 L547.9 828.7 L548.4 827.9 L548.8 827.0 L549.3 828.5 L549.7 828.2 L550.2 826.8 L550.6 826.0 L551.1 827.9 L551.5 827.2 L552.0 828.7 L552.4 826.2 L552.9 828.6 L553.3 828.6 L553.8 826.4 L554.2 826.6 L554.7 827.9 L555.1 826.7 L555.6 827.4 L556.1 827.6 L556.5 827.1 L557.0 826.2 L557.4 826.8 L557.9 828.6 L558.3 828.5 L558.8 826.2 L559.2 828.2 L559.7 828.8 L560.1 827.9 L560.6 829.1 L561.0 827.9 L561.5 827.5 L561.9 827.2 L562.4 827.9 L562.8 828.1 L563.3 829.3 L563.7 826.4 L564.2 827.0 L564.6 829.0 L565.1 828.3 L565.5 827.0 L566.0 827.9 L566.4 826.2 L566.9 826.5 L567.3 826.1 L567.8 828.8 L568.2 826.4 L568.7 827.2 L569.1 827.1 L569.6 828.4 L570.0 826.3 L570.5 826.0 L570.9 826.6 L571.4 828.0 L571.8 827.2 L572.3 826.3 L572.7 827.0 L573.0 827.0 L573.3 824.0 L573.6 827.0 L573.2 827.0 L573.6 828.5 L574.1 828.5 L574.5 826.1 L575.0 828.9 L575.4 826.4 L575.9 827.5 L576.3 827.5 L576.8 826.2 L577.2 826.5 L577.7 828.6 L578.1 828.5 L578.6 828.8 L579.0 829.4 L579.5 829.2 L579.9 827.2 L580.4 828.4 L580.8 828.4 L581.3 826.9 L581.7 828.8 L582.2 829.3 L582.6 828.2 L583.1 828.9 L583.5 827.2 L584.0 829.1 L584.4 827.4 L584.9 827.3 L585.3 828.2 L585.8 828.3 L586.2 827.8 L586.7 829.1 L587.2 828.8 L587.6 828.1 L588.1 829.3 L588.5 827.7 L589.0 827.6 L589.4 829.6 L589.9 827.4 L590.3 826.8 L590.8 829.2 L591.2 828.7 L591.7 827.4 L592.1 829.1 L592.6 828.7 L593.0 827.9 L593.5 828.2 L593.9 829.6 L594.4 828.2 L594.8 826.7 L595.3 827.9 L595.7 827.4 L596.2 829.7 L596.6 827.9 L597.0 827.9 L597.3 823.0 L597.6 827.9 L597.1 827.8 L597.5 829.0 L598.0 829.0 L598.4 826.7 L598.9 828.8 L599.3 829.6 L599.8 828.4 L600.2 827.4 L600.7 829.6 L601.1 826.7 L601.6 828.2 L602.0 827.2 L602.5 828.4 L602.9 827.9 L603.4 829.5 L603.8 826.8 L604.3 828.1 L604.7 827.5 L605.2 826.9 L605.6 829.4 L606.1 828.8 L606.5 827.8 L607.0 828.4 L607.4 828.1 L607.9 826.8 L608.3 827.7 L608.8 826.7 L609.2 826.9 L609.7 829.5 L610.1 829.3 L610.6 827.6 L611.0 826.7 L611.5 829.6 L611.9 826.9 L612.0 826.9 L612.3 823.5 L612.6 826.9 L612.4 827.5 L612.8 829.5 L613.3 828.6 L613.7 828.2 L614.2 829.3 L614.6 829.8 L615.1 828.7 L615.5 829.8 L616.0 826.9 L616.4 828.5 L616.9 829.1 L617.3 829.6 L617.8 828.4 L618.3 828.9 L618.7 827.7 L619.2 829.2 L619.6 828.7 L620.1 830.1 L620.5 828.6 L621.0 827.4 L621.4 829.5 L621.9 828.3 L622.3 827.3 L622.8 830.1 L623.2 828.5 L623.7 827.4 L624.1 827.5 L624.6 827.7 L625.0 830.0 L625.5 829.6 L625.9 827.0 L626.4 829.3 L626.8 828.0 L627.3 828.4 L627.7 829.4 L628.0 829.4 L628.3 822.0 L628.6 829.4 L628.2 827.9 L628.6 827.9 L629.1 830.1 L629.5 829.6 L630.0 829.8 L630.4 829.5 L630.9 830.2 L631.3 829.5 L631.8 829.5 L632.2 828.0 L632.7 829.4 L633.1 830.2 L633.6 828.9 L634.0 829.4 L634.5 827.6 L634.9 828.6 L635.4 828.8 L635.8 829.5 L636.3 828.8 L636.7 827.8 L637.2 830.4 L637.6 828.7 L638.1 827.5 L638.5 829.9 L639.0 828.3 L639.4 830.3 L639.9 827.2 L640.3 829.7 L640.8 829.4 L641.2 829.5 L641.7 827.2 L642.1 828.8 L642.6 828.8 L643.0 828.1 L643.5 827.4 L643.9 829.2 L644.4 828.4 L644.8 830.5 L645.3 828.0 L645.7 828.5 L646.2 829.4 L646.6 827.6 L647.1 827.7 L647.5 827.5 L648.0 830.1 L648.4 829.9 L648.9 827.6 L649.4 828.2 L649.8 829.5 L650.3 827.4 L650.7 827.5 L651.2 827.9 L651.6 829.9 L652.1 828.1 L652.5 829.8 L653.0 827.8 L653.4 829.4 L653.9 829.6 L654.3 829.5 L654.8 827.9 L655.2 828.9 L655.7 828.2 L656.1 828.4 L656.6 828.5 L657.0 830.4 L657.5 828.0 L657.9 828.7 L658.4 830.0 L658.8 827.6 L659.3 830.0 L659.7 830.5 L660.0 830.5 L660.3 823.0 L660.6 830.5 L660.2 829.5 L660.6 830.5 L661.1 829.0 L661.5 830.1 L662.0 830.8 L662.4 829.1 L662.9 829.0 L663.3 830.7 L663.8 829.8 L664.2 829.2 L664.7 828.8 L665.1 829.9 L665.6 830.8 L666.0 829.2 L666.5 829.1 L666.9 829.2 L667.4 827.6 L667.8 830.3 L668.3 830.0 L668.7 829.7 L669.2 829.9 L669.6 830.3 L670.1 829.0 L670.5 829.5 L671.0 828.4 L671.4 829.5 L671.9 829.8 L672.3 829.5 L672.8 828.3 L673.2 828.5 L673.7 827.7 L674.1 829.0 L674.6 829.6 L675.0 828.8 L675.5 829.9 L675.9 828.9 L676.4 829.2 L676.8 828.3 L677.3 829.5 L677.7 828.4 L678.2 828.4 L678.6 829.1 L679.1 829.9 L679.5 829.4 L680.0 828.5 L680.0 829.7 L680.5 830.2 L680.9 828.6 L681.4 828.3 L681.8 830.7 L682.2 829.0 L682.3 829.0 L682.6 818.3 L682.9 829.0 L682.7 829.8 L683.1 829.5 L683.6 829.6 L684.0 829.0 L684.5 828.5 L685.0 830.2 L685.4 830.2 L685.9 831.0 L686.3 829.6 L686.8 830.8 L687.2 829.7 L687.6 831.2 L688.1 828.6 L688.5 829.1 L689.0 830.6 L689.0 830.6 L689.3 824.0 L689.6 830.6 L689.5 829.5 L689.9 829.9 L690.0 829.9 L690.3 822.0 L690.6 829.9 L690.4 831.0 L690.8 828.8 L691.2 828.4 L691.5 828.4 L691.8 823.0 L692.1 828.4 L691.7 828.2 L692.1 830.1 L692.6 831.2 L693.0 831.2 L693.3 820.0 L693.6 831.2 L693.0 829.0 L693.5 829.8 L694.0 829.6 L694.2 829.6 L694.5 822.0 L694.8 829.6 L694.4 829.8 L694.9 830.9 L695.3 831.1 L695.5 831.1 L695.8 819.5 L696.1 831.1 L695.8 830.1 L696.2 829.8 L696.5 829.8 L696.8 823.0 L697.1 829.8 L696.6 831.2 L697.1 829.7 L697.5 829.3 L698.0 829.8 L698.5 830.4 L698.9 829.1 L699.0 829.1 L699.3 823.0 L699.6 829.1 L699.4 830.7 L699.8 829.5 L700.2 828.5 L700.7 830.6 L701.1 831.2 L701.6 831.3 L702.0 831.5 L702.5 828.6 L703.0 831.5 L703.4 831.3 L703.9 831.3 L704.3 828.5 L704.8 830.6 L705.2 829.1 L705.6 831.4 L706.1 829.4 L706.5 828.7 L707.0 830.4 L707.5 830.7 L707.9 830.2 L708.0 830.2 L708.3 825.0 L708.6 830.2 L708.4 829.8 L708.8 828.8 L709.2 830.9 L709.7 828.6 L710.1 830.4 L710.6 828.9 L711.0 828.9 L711.3 823.0 L711.6 828.9 L711.0 830.0 L711.5 830.5 L712.0 829.4 L712.4 831.0 L712.9 829.4 L713.0 829.4 L713.3 824.0 L713.6 829.4 L713.3 831.4 L713.8 829.9 L714.0 829.9 L714.3 822.0 L714.6 829.9 L714.2 830.9 L714.6 830.1 L715.1 829.7 L715.5 829.0 L716.0 830.7 L716.5 828.9 L716.9 830.2 L717.4 830.0 L717.8 829.7 L718.2 829.6 L718.7 830.3 L719.0 830.3 L719.3 825.0 L719.6 830.3 L719.1 831.6 L719.6 831.3 L720.0 831.3 L720.3 823.0 L720.6 831.3 L720.0 829.8 L720.5 830.7 L721.0 830.8 L721.0 830.8 L721.3 823.5 L721.6 830.8 L721.4 831.1 L721.9 830.8 L722.0 830.8 L722.3 821.0 L722.6 830.8 L722.3 829.0 L722.8 829.3 L723.0 829.3 L723.3 818.0 L723.6 829.3 L723.2 831.4 L723.6 829.7 L724.1 830.7 L724.4 830.7 L724.7 810.0 L725.0 830.7 L724.5 829.1 L725.0 830.8 L726.0 831.5 L728.2 831.4 L730.3 831.4 L732.5 831.6 L734.6 831.8 L736.8 832.0 L738.9 831.6 L741.1 831.9 L743.2 831.9 L745.4 832.1 L747.0 815.0 L749.9 780.0 L752.0 720.0 L753.5 680.0 L754.3 600.0 L754.5 565.0 L755.5 470.0 L756.3 431.0 L759.7 415.7 L762.0 413.4 L765.0 410.6 L768.5 406.8 L770.5 403.5 L772.5 400.0 L775.0 396.6 L777.4 393.6 L780.5 389.6 L783.6 386.1 L785.0 288.8 L1135.5 288.8 L1135.3 878.0 L1136.0 760.0 L1136.5 699.0 L1136.6 700.3 L1136.7 701.9 L1136.8 703.9 L1137.0 706.0 L1137.2 708.4 L1137.3 710.9 L1137.5 713.3 L1137.7 715.8 L1137.9 718.1 L1138.1 720.2 L1138.3 722.0 L1138.6 724.5 L1138.9 726.8 L1139.2 728.9 L1139.5 730.8 L1139.9 732.6 L1140.2 734.3 L1140.6 736.0 L1141.3 738.7 L1141.9 741.0 L1142.7 743.0 L1143.5 745.0 L1144.7 747.4 L1146.1 749.6 L1147.4 751.5 L1149.2 753.8 L1151.0 755.5 L1152.8 756.8 L1155.0 758.0 L1156.9 759.0 L1159.0 760.2 L1161.0 761.3 L1162.4 762.3 L1163.7 763.4 L1166.2 764.7 L1167.7 765.3 L1169.4 766.1 L1171.4 766.8 L1173.5 767.7 L1175.7 768.5 L1177.8 769.3 L1179.9 770.1 L1181.7 770.8 L1183.9 771.7 L1186.1 772.6 L1188.1 773.4 L1190.1 774.2 L1191.9 774.9 L1193.7 775.6 L1195.9 776.4 L1197.6 777.1 L1199.6 777.7 L1202.3 778.6 L1203.8 779.1 L1205.5 779.6 L1207.3 780.2 L1209.1 780.8 L1211.1 781.5 L1213.2 782.1 L1215.4 782.7 L1217.7 783.4 L1220.0 784.0 L1221.8 784.5 L1223.6 784.9 L1225.4 785.4 L1227.2 785.8 L1229.1 786.3 L1231.1 786.8 L1233.2 787.2 L1235.3 787.7 L1237.5 788.2 L1239.9 788.6 L1242.4 789.1 L1245.0 789.6 L1246.7 789.9 L1248.4 790.2 L1250.2 790.5 L1252.0 790.8 L1253.9 791.1 L1255.9 791.4 L1257.9 791.7 L1259.9 792.0 L1262.0 792.3 L1264.0 792.6 L1266.1 792.9 L1268.2 793.2 L1270.4 793.5 L1272.5 793.8 L1274.6 794.1 L1276.7 794.4 L1278.8 794.7 L1280.9 794.9 L1283.0 795.2 L1285.0 795.5 L1287.0 795.8 L1289.0 796.0 L1291.0 796.3 L1292.9 796.5 L1294.9 796.8 L1296.8 797.1 L1298.8 797.3 L1300.7 797.5 L1302.7 797.8 L1304.7 798.0 L1306.6 798.3 L1308.6 798.5 L1310.6 798.7 L1312.7 799.0 L1314.7 799.2 L1316.8 799.5 L1318.9 799.7 L1321.1 799.9 L1323.3 800.2 L1325.5 800.4 L1327.4 800.6 L1329.3 800.8 L1331.3 801.0 L1333.2 801.2 L1335.2 801.4 L1337.3 801.6 L1339.3 801.8 L1341.4 802.0 L1343.4 802.2 L1345.5 802.4 L1347.6 802.6 L1349.8 802.8 L1351.9 803.0 L1354.0 803.2 L1356.1 803.4 L1358.2 803.5 L1360.4 803.7 L1362.5 803.9 L1364.6 804.1 L1366.7 804.3 L1368.8 804.5 L1370.9 804.6 L1372.9 804.8 L1375.0 805.0 L1377.1 805.2 L1379.2 805.4 L1381.4 805.5 L1383.7 805.7 L1386.0 805.9 L1388.3 806.1 L1390.7 806.3 L1393.0 806.4 L1395.4 806.6 L1397.7 806.8 L1400.1 807.0 L1402.3 807.1 L1404.6 807.3 L1406.8 807.5 L1408.9 807.6 L1411.0 807.8 L1412.9 807.9 L1414.8 808.1 L1416.6 808.2 L1418.2 808.3 L1419.8 808.4 L1421.2 808.5 L1422.4 808.6 L1423.5 808.7" stroke="#bb88ff" stroke-width="1.2" fill="none" stroke-linejoin="round"/><path d="M524.5 882.2 L525.2 881.3 L526.1 881.6 L527.2 882.7 L528.4 882.4 L529.6 881.7 L531.0 882.4 L532.4 882.2 L533.9 882.0 L535.4 882.5 L537.0 882.8 L538.5 883.1 L540.0 883.6 L541.1 882.7 L542.3 884.0 L543.5 883.1 L544.7 883.7 L545.9 883.4 L547.2 883.6 L548.4 884.2 L549.7 884.4 L551.0 883.5 L552.3 883.5 L553.6 884.2 L554.9 884.3 L556.2 884.6 L557.5 885.5 L558.7 884.6 L560.0 884.6 L561.3 885.0 L562.5 884.9 L563.8 885.2 L565.1 885.4 L566.4 884.9 L567.7 886.0 L569.0 885.9 L570.3 886.2 L571.6 885.7 L572.9 885.4 L574.1 886.3 L575.3 886.6 L576.5 886.7 L577.7 886.4 L578.9 885.4 L580.0 885.7 L581.4 886.2 L582.8 885.0 L584.1 885.2 L585.4 885.1 L586.7 885.5 L587.9 884.0 L589.1 884.1 L590.3 884.5 L591.5 883.3 L592.7 883.6 L594.0 884.2 L595.2 883.7 L596.4 884.3 L597.7 883.6 L598.9 884.6 L600.2 884.0 L601.4 885.1 L602.6 885.7 L603.8 884.8 L605.1 885.5 L606.3 886.0 L607.5 887.1 L608.8 886.1 L610.0 886.9 L611.2 888.0 L612.5 886.6 L613.7 888.1 L615.0 886.8 L616.2 887.6 L617.5 887.5 L618.7 887.9 L620.0 887.4 L621.2 887.7 L622.5 888.4 L623.7 887.4 L625.0 888.6 L626.3 887.5 L627.5 887.7 L628.8 888.0 L630.1 888.6 L631.4 888.4 L632.6 888.8 L633.9 888.3 L635.1 888.8 L636.4 888.5 L637.6 888.8 L638.8 889.8 L640.0 889.7 L641.4 889.6 L642.7 888.9 L644.1 890.1 L645.4 889.0 L646.7 890.0 L648.0 889.5 L649.2 890.2 L650.5 889.0 L651.7 889.4 L653.0 889.0 L654.2 890.5 L655.4 890.2 L656.5 889.9 L657.7 889.8 L658.8 891.2 L660.0 890.5 L661.1 890.4 L662.4 891.1 L663.6 891.1 L665.0 892.0 L666.1 890.9 L667.3 892.1 L668.6 892.4 L669.9 891.2 L671.2 892.2 L672.5 892.4 L673.9 892.5 L675.2 892.7 L676.5 892.1 L677.7 892.4 L678.9 892.3 L680.0 892.1 L681.0 891.6 L682.7 892.2 L684.3 892.0 L685.8 891.5 L687.1 891.9 L688.3 891.9 L689.2 891.1 L690.0 890.8 L681.5 891.6 L682.5 891.9 L682.5 889.5 L685.0 892.0 L687.0 891.8 L689.0 891.8 L690.4 889.0 L691.5 891.1 L692.5 891.8 L692.9 891.5 L693.2 897.0 L693.9 891.8 L694.5 897.0 L695.2 891.8 L695.8 897.0 L696.2 891.5 L697.5 887.8 L698.5 891.2 L699.8 891.5 L700.1 897.0 L700.8 891.8 L701.5 897.0 L702.2 891.8 L702.5 896.5 L702.8 891.5 L704.0 891.0 L706.0 891.3 L707.9 889.0 L708.9 891.3 L709.3 896.7 L713.0 896.5 L714.2 894.5 L715.5 896.6 L720.5 896.5 L721.3 893.0 L722.0 890.0 L722.8 892.0 L723.5 886.0 L724.4 882.5 L725.2 888.0 L725.8 893.5 L726.6 896.4 L744.8 896.5 L747.0 893.0 L748.6 888.4 L751.1 879.4 L752.4 856.5 L753.5 820.0 L754.3 780.0 L755.3 700.0 L756.1 619.4" stroke="#ff0000" stroke-width="2.4" fill="none" stroke-linejoin="round"/><path d="M1139.5 764.7 L1140.1 766.6 L1141.0 769.3 L1142.0 772.0 L1142.7 773.9 L1143.5 775.8 L1144.4 777.8 L1145.6 779.8 L1146.7 781.5 L1147.8 783.2 L1149.1 785.0 L1150.6 786.8 L1152.5 788.6 L1153.8 789.8 L1155.2 791.0 L1156.7 792.2 L1158.2 793.4 L1160.0 794.6 L1161.8 795.9 L1163.9 797.2 L1166.2 798.5 L1167.7 799.4 L1169.4 800.2 L1171.2 801.2 L1173.0 802.1 L1175.0 803.0 L1176.9 804.0 L1179.0 804.9 L1181.0 805.9 L1183.0 806.8 L1185.1 807.7 L1187.1 808.6 L1189.0 809.4 L1190.9 810.2 L1192.9 811.0 L1194.8 811.8 L1196.6 812.5 L1198.5 813.2 L1200.3 813.9 L1202.2 814.6 L1204.0 815.2 L1205.9 815.8 L1207.9 816.5 L1209.9 817.1 L1212.0 817.7 L1214.2 818.3 L1216.0 818.8 L1217.8 819.3 L1219.7 819.7 L1221.6 820.2 L1223.5 820.6 L1225.4 821.1 L1227.4 821.5 L1229.4 821.9 L1231.5 822.4 L1233.6 822.8 L1235.8 823.3 L1238.0 823.7 L1240.3 824.2 L1242.6 824.6 L1245.0 825.1 L1246.8 825.5 L1248.8 825.8 L1250.8 826.2 L1253.0 826.6 L1255.2 827.0 L1257.5 827.4 L1259.8 827.9 L1262.2 828.3 L1264.6 828.7 L1267.0 829.1 L1269.3 829.5 L1271.6 829.9 L1273.8 830.3 L1276.0 830.7 L1278.0 831.1 L1280.0 831.4 L1281.8 831.7 L1283.5 832.0 L1285.0 832.3 L1286.3 832.5 L1287.4 832.7 L1287.4 868.3 L1287.9 832.7 L1287.9 832.7 L1289.0 832.9 L1290.4 833.1 L1291.8 833.4 L1293.5 833.6 L1295.3 833.9 L1297.2 834.3 L1299.2 834.6 L1301.3 835.0 L1303.6 835.3 L1305.8 835.7 L1308.2 836.1 L1310.6 836.5 L1313.1 836.9 L1315.5 837.2 L1318.0 837.6 L1320.5 837.9 L1323.0 838.3 L1325.4 838.6 L1327.2 838.8 L1329.1 839.1 L1331.0 839.3 L1333.0 839.5 L1335.0 839.7 L1337.0 839.9 L1339.0 840.2 L1341.1 840.4 L1343.2 840.6 L1345.3 840.8 L1347.4 841.0 L1349.5 841.2 L1351.7 841.5 L1353.8 841.7 L1355.9 841.9 L1358.1 842.1 L1360.2 842.3 L1362.4 842.5 L1364.5 842.7 L1366.7 842.9 L1368.8 843.1 L1370.9 843.3 L1372.9 843.5 L1375.0 843.7 L1377.1 843.9 L1379.2 844.1 L1381.4 844.3 L1383.7 844.5 L1386.0 844.7 L1388.3 845.0 L1390.7 845.2 L1393.0 845.4 L1395.4 845.6 L1397.7 845.8 L1400.1 846.0 L1402.3 846.2 L1404.6 846.4 L1406.8 846.6 L1408.9 846.8 L1411.0 847.0 L1412.9 847.2 L1414.8 847.3 L1416.6 847.5 L1418.2 847.6 L1419.8 847.8 L1421.2 847.9 L1422.4 848.0 L1423.5 848.1" stroke="#ff0000" stroke-width="2.4" fill="none" stroke-linejoin="round"/><path d="M524.5 801.2 L530.6 801.1 L536.8 801.2 L542.9 801.1 L549.0 801.1 L555.2 801.2 L561.3 801.2 L567.5 801.1 L573.6 801.1 L579.7 801.1 L585.9 801.1 L590.4 801.1 L590.7 798.2 L591.0 801.1 L592.0 801.2 L598.1 801.2 L604.3 801.2 L610.4 801.2 L616.5 801.2 L622.7 801.3 L628.8 801.3 L635.0 801.1 L641.1 801.2 L647.2 801.2 L653.4 801.3 L659.5 801.3 L665.6 801.2 L671.8 801.2 L677.9 801.3 L684.0 801.2 L690.2 801.2 L696.3 801.2 L702.4 801.2 L708.6 801.2 L714.7 801.3 L720.9 801.3 L727.0 801.3 L733.1 801.3 L739.3 801.3 L745.4 801.3 L745.8 700.0 L746.2 595.0 L746.4 509.8 L747.0 470.0 L748.0 436.0 L751.5 420.0 L755.8 410.2 L759.7 415.7 L762.0 413.4 L765.0 410.6 L768.5 406.8 L770.5 403.5 L772.5 400.0 L775.0 396.6 L777.4 393.6 L780.5 389.6 L783.6 386.1 L783.1 339.0 L785.5 270.0" stroke="#000000" stroke-width="1.2" fill="none" stroke-linejoin="round"/><path d="M1139.0 270.0 L1139.6 600.0 L1140.4 686.0 L1141.1 701.0 L1141.6 703.5 L1142.4 697.0 L1143.2 660.0 L1143.6 640.0 L1145.5 530.0 L1146.7 503.5 L1147.3 560.0 L1147.6 640.0 L1148.1 708.6 L1149.5 719.0 L1151.5 727.8 L1154.0 734.5 L1157.0 740.2 L1158.1 740.8 L1159.5 742.6 L1161.3 744.0 L1163.2 746.1 L1165.0 747.3 L1166.9 749.1 L1168.9 750.2 L1171.0 751.8 L1173.0 752.9 L1174.9 754.0 L1176.9 754.8 L1178.6 756.0 L1180.5 756.8 L1182.7 757.6 L1184.5 758.3 L1186.3 759.0 L1188.4 759.9 L1190.5 760.7 L1192.9 761.4 L1195.4 762.0 L1197.2 762.3 L1198.9 763.1 L1200.8 763.8 L1202.7 764.0 L1204.7 764.5 L1206.8 765.1 L1209.1 765.6 L1211.6 766.4 L1214.2 766.9 L1215.9 767.5 L1217.7 767.9 L1219.5 768.3 L1221.4 768.5 L1223.4 768.8 L1225.5 769.3 L1227.5 769.5 L1229.7 770.0 L1231.8 770.1 L1234.0 770.7 L1236.2 771.1 L1238.4 771.3 L1240.6 771.7 L1242.8 772.1 L1245.0 772.7 L1246.9 773.0 L1248.9 773.2 L1250.9 773.3 L1252.9 773.5 L1254.9 774.1 L1256.9 774.1 L1259.0 774.5 L1261.0 774.8 L1263.1 774.8 L1265.2 775.4 L1267.3 775.3 L1269.4 776.0 L1271.5 776.1 L1273.6 776.2 L1275.7 776.5 L1277.9 776.9 L1280.0 777.2 L1282.0 777.0 L1284.0 777.4 L1285.9 777.5 L1287.9 777.9 L1289.8 778.3 L1291.8 778.4 L1293.7 778.8 L1295.7 778.8 L1297.7 779.1 L1299.7 779.4 L1301.8 779.6 L1303.9 780.0 L1306.0 780.3 L1308.2 780.3 L1310.4 780.8 L1312.8 780.8 L1315.1 781.2 L1317.6 781.4 L1319.4 781.4 L1321.1 781.7 L1323.0 781.9 L1324.8 781.7 L1326.7 782.2 L1328.7 782.1 L1330.6 782.1 L1332.6 782.7 L1334.6 782.8 L1336.6 782.8 L1338.7 782.6 L1340.7 782.7 L1342.8 783.3 L1344.9 783.3 L1347.0 783.5 L1349.1 783.7 L1351.2 783.7 L1353.3 783.9 L1355.4 783.8 L1357.5 784.0 L1359.6 784.2 L1361.7 784.1 L1363.8 784.4 L1365.9 784.7 L1368.0 784.6 L1370.0 784.9 L1372.1 784.9 L1374.2 784.8 L1376.4 784.8 L1378.7 785.1 L1381.0 785.3 L1383.4 785.4 L1385.7 785.3 L1388.1 785.7 L1390.5 785.6 L1392.9 785.7 L1395.3 785.7 L1397.7 786.1 L1400.0 786.0 L1402.3 786.1 L1404.6 786.5 L1406.8 786.3 L1408.9 786.6 L1410.9 786.4 L1412.9 786.7 L1414.8 786.8 L1416.6 786.9 L1418.2 786.9 L1419.7 786.8 L1421.1 787.0 L1422.4 787.2 L1423.5 787.0" stroke="#000000" stroke-width="1.2" fill="none" stroke-linejoin="round"/><path d="M524.5 877.9 L525.4 877.9 L525.7 846.9 L526.0 877.9 L528.4 877.9 L528.7 871.7 L529.0 877.9 L528.5 877.9 L532.5 877.9 L535.4 877.9 L535.7 871.7 L536.0 877.9 L536.5 877.9 L540.6 877.9 L544.6 877.8 L548.6 877.9 L552.6 877.8 L556.6 877.8 L560.6 877.9 L564.7 877.9 L568.7 878.0 L570.3 878.0 L570.6 875.8 L570.9 878.0 L572.7 877.8 L576.7 877.9 L580.7 877.9 L583.4 877.9 L583.7 873.9 L584.0 877.9 L584.7 877.9 L588.8 877.9 L592.8 877.9 L596.8 878.0 L600.3 878.0 L600.6 876.8 L600.9 878.0 L600.8 877.8 L604.8 877.9 L608.8 877.8 L612.9 878.0 L616.9 877.9 L620.9 878.0 L624.9 877.8 L628.9 877.9 L632.9 877.8 L637.0 877.9 L641.0 878.0 L641.5 878.0 L641.8 861.0 L642.1 878.0 L645.0 877.8 L649.0 877.8 L651.3 877.8 L651.6 868.0 L651.9 877.8 L653.0 877.9 L657.0 877.8 L661.1 878.0 L665.1 878.0 L669.1 877.8 L673.1 878.0 L677.1 877.8 L681.1 877.8 L685.2 877.8 L689.2 877.9 L689.3 877.9 L689.6 857.1 L689.9 877.9 L693.2 878.0 L697.2 878.0 L697.3 878.0 L697.6 857.1 L697.9 878.0 L701.2 877.8 L705.2 877.9 L709.3 878.0 L713.3 877.9 L717.3 878.0 L721.3 877.8 L723.5 877.8 L723.8 844.4 L724.1 877.8 L725.3 878.0 L729.3 877.8 L733.4 877.8 L737.4 877.9 L741.4 877.9 L745.4 877.9 L746.5 878.0 L747.1 740.0 L747.2 485.0 L748.2 445.0 L749.0 432.0 L751.0 425.0 L753.0 414.0 L755.8 410.2 L757.5 412.0 L759.7 415.7 L762.0 413.4 L765.0 410.6 L768.5 406.8 L770.5 403.5 L772.5 400.0 L775.0 396.6 L777.4 393.6 L780.5 389.6 L783.6 386.1 L785.5 293.5 L1139.6 293.5 L1139.2 600.0 L1139.0 695.0 L1139.8 708.0 L1142.4 735.5 L1143.7 712.0 L1144.4 690.0 L1145.2 640.0 L1146.5 594.5 L1147.1 700.0 L1147.4 740.0 L1149.0 760.6 L1150.0 763.0 L1151.5 766.0 L1153.1 768.4 L1155.0 770.5 L1156.9 772.4 L1159.3 774.3 L1160.9 775.5 L1162.8 776.9 L1164.8 778.3 L1166.6 779.5 L1168.6 780.8 L1170.6 782.0 L1173.1 783.2 L1174.8 783.8 L1176.7 784.4 L1178.7 785.0 L1180.9 785.6 L1183.0 786.2 L1185.0 786.8 L1187.0 787.4 L1188.9 788.1 L1190.9 788.8 L1192.8 789.5 L1194.7 790.1 L1196.4 790.8 L1198.7 791.8 L1200.8 792.8 L1202.9 793.8 L1205.0 794.8 L1206.8 795.7 L1208.2 796.5 L1210.4 797.4 L1214.2 798.6 L1215.6 799.0 L1217.2 799.5 L1218.8 799.9 L1220.6 800.5 L1222.5 801.0 L1224.5 801.5 L1226.6 802.1 L1228.8 802.7 L1231.0 803.3 L1233.3 803.8 L1235.6 804.4 L1237.9 805.0 L1240.3 805.5 L1242.6 806.0 L1245.0 806.5 L1246.8 806.9 L1248.6 807.2 L1250.5 807.5 L1252.4 807.9 L1254.3 808.2 L1256.3 808.5 L1258.3 808.9 L1260.3 809.2 L1262.3 809.5 L1264.4 809.8 L1266.5 810.1 L1268.5 810.4 L1270.6 810.7 L1272.7 811.0 L1274.7 811.3 L1276.8 811.6 L1278.9 811.9 L1280.9 812.2 L1283.0 812.5 L1285.0 812.8 L1287.0 813.1 L1289.0 813.4 L1291.0 813.6 L1292.9 813.9 L1294.9 814.2 L1296.8 814.4 L1298.8 814.7 L1300.7 814.9 L1302.7 815.2 L1304.7 815.4 L1306.6 815.7 L1308.6 815.9 L1310.6 816.2 L1312.7 816.4 L1314.7 816.7 L1316.8 816.9 L1318.9 817.2 L1321.1 817.5 L1323.3 817.7 L1325.5 818.0 L1327.4 818.2 L1329.3 818.5 L1331.3 818.7 L1333.2 818.9 L1335.2 819.2 L1337.3 819.4 L1339.3 819.7 L1341.4 819.9 L1343.4 820.2 L1345.5 820.4 L1347.6 820.7 L1349.8 820.9 L1351.9 821.2 L1354.0 821.4 L1356.1 821.7 L1358.2 821.9 L1360.4 822.2 L1362.5 822.4 L1364.6 822.7 L1366.7 823.0 L1368.8 823.2 L1370.9 823.5 L1372.9 823.7 L1375.0 824.0 L1377.1 824.3 L1379.2 824.5 L1381.4 824.8 L1383.7 825.1 L1386.0 825.4 L1388.3 825.7 L1390.7 826.1 L1393.0 826.4 L1395.4 826.7 L1397.7 827.0 L1400.1 827.3 L1402.3 827.6 L1404.6 827.9 L1406.8 828.2 L1408.9 828.5 L1411.0 828.8 L1412.9 829.1 L1414.8 829.3 L1416.6 829.6 L1418.2 829.8 L1419.8 830.0 L1421.2 830.2 L1422.4 830.4 L1423.5 830.5" stroke="#00ee00" stroke-width="1.2" fill="none" stroke-linejoin="round"/><path d="M524.5 895.9 L525.7 895.7 L527.0 896.0 L528.6 896.0 L530.3 895.7 L532.2 895.9 L534.2 896.0 L536.4 896.3 L538.6 896.5 L540.9 896.5 L543.3 896.3 L545.7 896.2 L548.1 896.6 L550.6 896.6 L553.0 896.7 L555.4 896.3 L557.7 896.8 L560.0 896.6 L561.9 896.6 L563.8 896.4 L565.8 896.9 L567.7 896.4 L569.7 896.8 L571.7 896.9 L573.7 896.9 L575.7 896.5 L577.7 897.1 L579.7 897.0 L581.7 897.1 L583.8 897.0 L585.8 897.1 L587.9 896.6 L589.9 896.7 L591.9 896.7 L594.0 896.9 L596.0 896.7 L598.0 897.3 L600.0 897.2 L602.0 896.9 L604.0 896.9 L606.0 896.9 L608.0 896.9 L610.0 897.0 L612.0 897.1 L614.0 897.4 L616.0 897.0 L618.0 897.4 L620.0 897.6 L622.0 897.3 L624.0 897.6 L626.0 897.4 L628.0 897.9 L630.0 897.6 L632.0 897.6 L634.0 898.0 L636.0 897.8 L638.0 897.7 L640.0 897.6 L642.0 897.6 L644.0 897.7 L646.0 897.5 L648.0 898.1 L650.0 898.2 L652.0 898.1 L654.0 897.9 L656.0 897.8 L658.0 897.8 L660.0 897.7 L662.0 897.8 L664.0 897.8 L666.0 898.0 L668.0 897.7 L670.0 898.0 L672.0 898.0 L674.0 897.7 L676.0 898.0 L678.0 898.3 L680.0 898.2 L682.0 898.0 L684.1 897.8 L686.1 898.2 L688.2 897.9 L690.4 898.3 L692.5 897.9 L694.6 897.9 L696.7 898.3 L698.8 897.9 L700.9 898.0 L703.0 898.3 L705.1 898.1 L707.1 898.1 L709.1 898.5 L711.1 898.4 L713.0 898.5 L714.8 898.2 L716.6 898.1 L718.3 898.3 L720.0 898.1 L722.7 898.5 L724.8 897.0 L725.4 894.2 L726.1 897.5 L727.9 898.4 L730.3 898.4 L732.7 898.0 L734.9 898.3 L737.0 898.2 L738.9 898.3 L740.7 898.1 L742.3 897.8 L743.6 898.0 L744.8 898.3 L746.0 890.0 L746.5 850.0 L747.6 680.0 L748.2 619.4" stroke="#0000ff" stroke-width="2.4" fill="none" stroke-linejoin="round"/><path d="M1140.1 755.8 L1141.5 768.0 L1144.2 786.7 L1145.2 770.0 L1146.3 748.9 L1146.8 775.0 L1147.0 793.5 L1147.8 795.0 L1149.0 797.0 L1150.1 798.2 L1151.3 799.3 L1152.5 800.4 L1153.6 801.5 L1154.7 802.5 L1156.0 803.5 L1157.5 804.5 L1159.1 805.3 L1160.7 805.9 L1162.8 805.8 L1165.0 805.4 L1166.5 805.2 L1168.2 805.1 L1170.3 805.2 L1171.6 805.4 L1173.2 805.7 L1174.8 806.1 L1176.5 806.5 L1178.3 807.0 L1180.0 807.5 L1181.6 808.1 L1183.3 808.7 L1185.0 809.4 L1186.7 810.1 L1188.4 810.8 L1189.8 811.5 L1190.9 812.1 L1192.7 813.5 L1193.5 815.0 L1194.4 816.4 L1195.3 818.0 L1196.4 819.6 L1197.4 820.7 L1198.5 821.8 L1199.7 822.9 L1201.0 824.0 L1202.5 825.0 L1204.1 826.0 L1205.8 827.0 L1207.4 827.9 L1208.9 828.7 L1210.3 829.5 L1211.6 830.3 L1213.0 831.0 L1215.0 831.9 L1217.0 832.8 L1218.4 833.4 L1218.4 865.6 L1218.9 833.6 L1218.9 833.6 L1220.3 834.1 L1222.4 834.9 L1224.7 835.8 L1227.4 836.7 L1230.0 837.5 L1231.7 838.0 L1233.2 838.4 L1234.7 838.8 L1236.4 839.2 L1238.6 839.6 L1241.4 840.2 L1245.0 840.9 L1246.4 841.2 L1248.0 841.5 L1249.7 841.8 L1251.5 842.1 L1253.4 842.5 L1255.4 842.8 L1257.4 843.2 L1259.5 843.6 L1261.7 844.0 L1263.9 844.3 L1266.2 844.7 L1268.4 845.1 L1270.7 845.5 L1273.0 845.9 L1275.2 846.3 L1277.5 846.7 L1279.7 847.1 L1281.8 847.5 L1283.9 847.8 L1285.9 848.2 L1287.9 848.5 L1290.1 848.9 L1292.2 849.2 L1294.3 849.6 L1296.4 850.0 L1298.4 850.3 L1300.4 850.7 L1302.3 851.0 L1304.3 851.3 L1306.2 851.7 L1308.2 852.0 L1310.2 852.3 L1312.2 852.6 L1314.3 852.9 L1316.4 853.2 L1318.5 853.5 L1320.7 853.8 L1323.0 854.1 L1325.4 854.4 L1327.2 854.6 L1329.1 854.8 L1331.0 855.0 L1333.0 855.2 L1335.0 855.4 L1337.0 855.6 L1339.0 855.8 L1341.1 856.0 L1343.2 856.1 L1345.3 856.3 L1347.4 856.5 L1349.5 856.7 L1351.7 856.8 L1353.8 857.0 L1355.9 857.2 L1358.1 857.3 L1360.2 857.5 L1362.4 857.7 L1364.5 857.8 L1366.7 858.0 L1368.8 858.1 L1370.9 858.3 L1372.9 858.4 L1375.0 858.6 L1377.1 858.8 L1379.2 858.9 L1381.4 859.1 L1383.7 859.2 L1386.0 859.4 L1388.3 859.5 L1390.7 859.7 L1393.0 859.9 L1395.4 860.0 L1397.7 860.2 L1400.1 860.3 L1402.3 860.5 L1404.6 860.6 L1406.8 860.7 L1408.9 860.9 L1411.0 861.0 L1412.9 861.1 L1414.8 861.2 L1416.6 861.4 L1418.2 861.5 L1419.8 861.6 L1421.2 861.6 L1422.4 861.7 L1423.5 861.8" stroke="#0000ff" stroke-width="2.4" fill="none" stroke-linejoin="round"/></g>
<rect x="524.5" y="277.5" width="899.0" height="635" fill="none" stroke="#000" stroke-width="1.15"/>
</svg>
</body></html>
